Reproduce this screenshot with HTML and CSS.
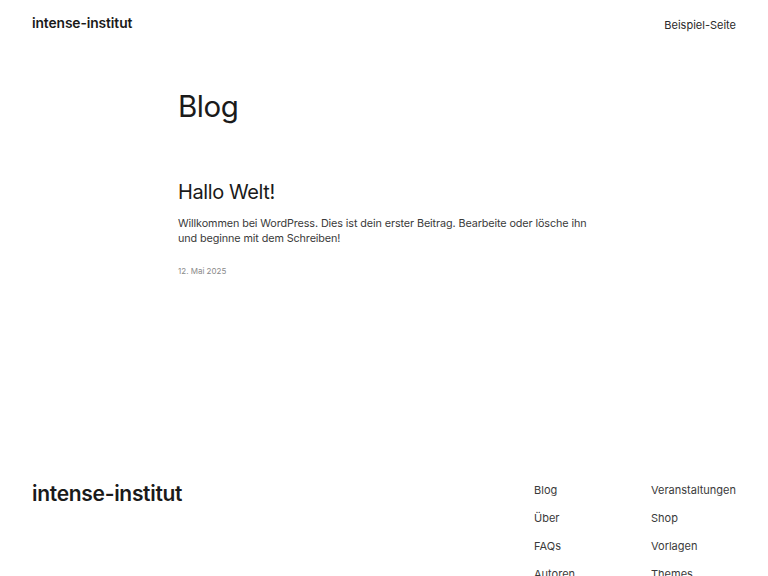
FILE: index.html
```
<!DOCTYPE html>
<html lang="de">
<head>
  <meta charset="UTF-8" />
  <meta name="viewport" content="width=device-width, initial-scale=1.0"/>
  <title>Blog – intense-institut</title>
  <link rel="stylesheet" href="styles.css">
</head>
<body>
  <header class="site-header">
    <a class="site-title" href="#">intense-institut</a>
    <nav class="header-nav">
      <a href="#">Beispiel-Seite</a>
    </nav>
  </header>
  <main class="site-main">
    <h1 class="page-title">Blog</h1>
    <article class="post">
      <h2 class="post-title"><a href="#">Hallo Welt!</a></h2>
      <p class="post-excerpt">Willkommen bei WordPress. Dies ist dein erster Beitrag. Bearbeite oder lösche ihn und beginne mit dem Schreiben!</p>
      <time class="post-date">12. Mai 2025</time>
    </article>
  </main>
  <footer class="site-footer">
    <a class="footer-title" href="#">intense-institut</a>
    <div class="footer-nav">
      <ul class="footer-col">
        <li><a href="#">Blog</a></li>
        <li><a href="#">Über</a></li>
        <li><a href="#">FAQs</a></li>
        <li><a href="#">Autoren</a></li>
      </ul>
      <ul class="footer-col">
        <li><a href="#">Veranstaltungen</a></li>
        <li><a href="#">Shop</a></li>
        <li><a href="#">Vorlagen</a></li>
        <li><a href="#">Themes</a></li>
      </ul>
    </div>
  </footer>
</body>
</html>
```

FILE: styles.css
```
html, body {
  margin: 0;
  padding: 0;
  background: #fff;
  color: #111;
  font-family: Inter, "Noto Sans", sans-serif;
  overflow: hidden;
}
a {
  color: inherit;
  text-decoration: none;
}
.site-header {
  display: flex;
  justify-content: space-between;
  align-items: center;
  padding: 14px 32px 0 32px;
  height: 17px;
}
.site-title {
  font-size: 13.8px;
  font-weight: 600;
  letter-spacing: -0.1px;
  color: #1a1a1a;
}
.header-nav a {
  font-size: 11px;
  color: #2a2a2a;
}
.site-main {
  width: 412px;
  margin: 0 auto;
  padding-top: 55px;
  height: 385px;
}
.page-title {
  margin: 0;
  font-size: 29.5px;
  font-weight: 400;
  letter-spacing: -0.5px;
  line-height: 40px;
  color: #1a1a1a;
}
.post {
  margin-top: 53px;
}
.post-title {
  margin: 0;
  font-size: 20px;
  font-weight: 400;
  letter-spacing: -0.4px;
  line-height: 26px;
  color: #1a1a1a;
}
.post-excerpt {
  margin: 11px 0 0 0;
  font-size: 10.8px;
  line-height: 15px;
  color: #3a3a3a;
  letter-spacing: -0.1px;
}
.post-date {
  display: block;
  margin-top: 20px;
  font-size: 8px;
  color: #8a8a8a;
}
.site-footer {
  display: flex;
  justify-content: space-between;
  padding: 0 32px;
}
.footer-title {
  font-size: 21px;
  font-weight: 600;
  letter-spacing: -0.3px;
  line-height: 26px;
  margin-top: 10px;
  color: #1a1a1a;
}
.footer-nav {
  display: flex;
  gap: 60px;
  padding-top: 12px;
}
.footer-col {
  list-style: none;
  margin: 0;
  padding: 0;
  display: flex;
  flex-direction: column;
  gap: 13px;
}
.footer-col li {
  font-size: 11px;
  line-height: 15px;
  color: #3a3a3a;
}
.footer-col:first-child {
  width: 57px;
}
```
